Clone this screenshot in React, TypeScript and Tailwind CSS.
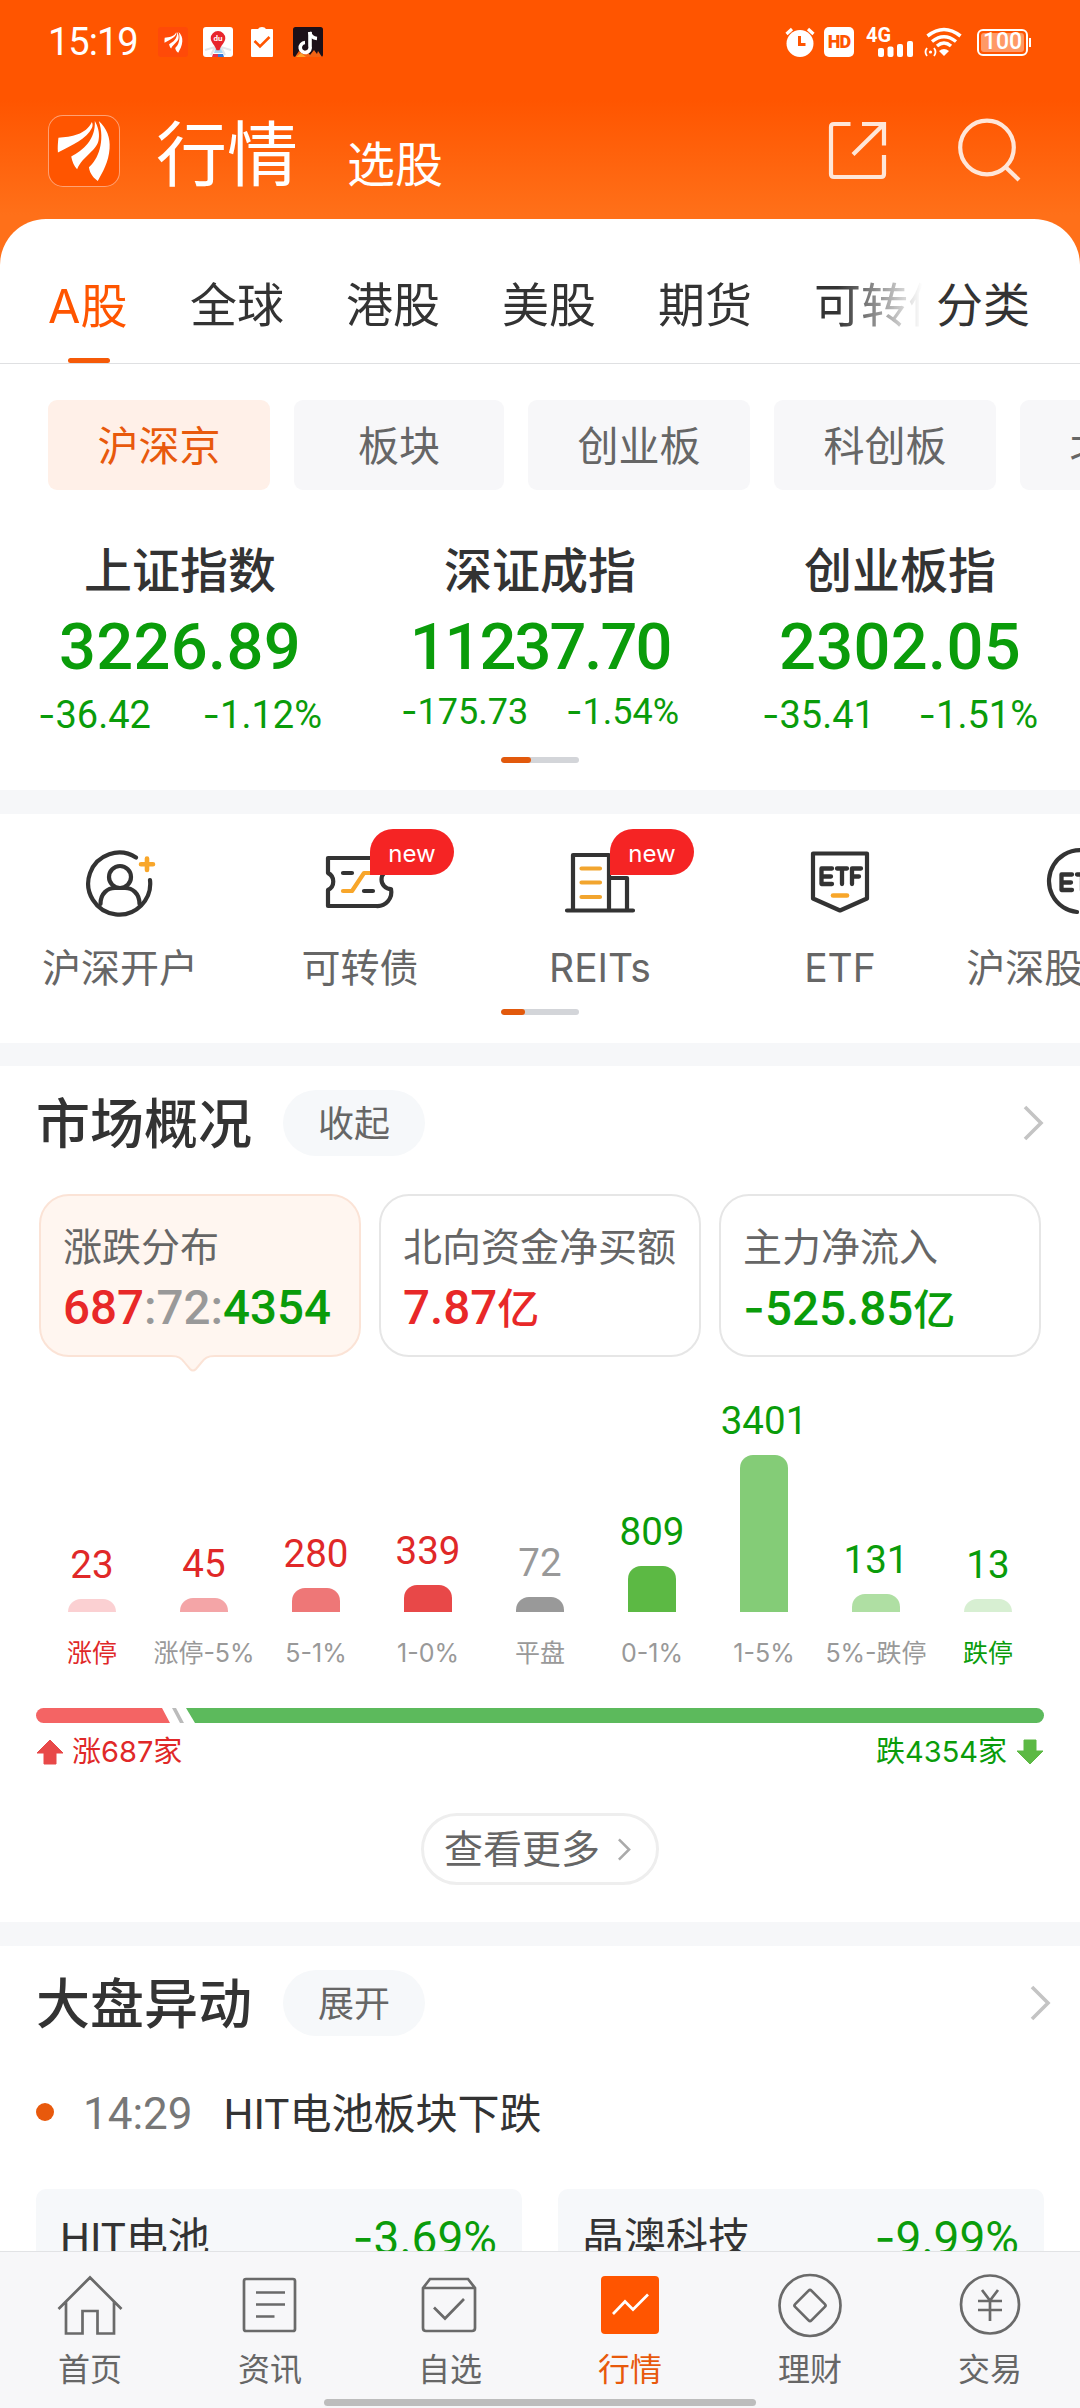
import React from "react";

const tabs = ["全球", "港股", "美股", "期货"];

const indices = [
  { name: "上证指数", value: "3226.89", diff: "-36.42", pct: "-1.12%", box: "w-[284px]", size: "text-[38px]", track: "tracking-[0.300px]" },
  { name: "深证成指", value: "11237.70", diff: "-175.73", pct: "-1.54%", box: "w-[278px]", size: "text-[36px] relative -top-[3px]", track: "tracking-[-2px]" },
  { name: "创业板指", value: "2302.05", diff: "-35.41", pct: "-1.51%", box: "w-[276px]", size: "text-[38px]", track: "tracking-[0.300px]" },
];

const bars = [
  { n: "23", label: "涨停", h: 13, bar: "bg-[#fbd0d2]", num: "text-[#e02828]", lab: "text-[#e02828]" },
  { n: "45", label: "涨停-5%", h: 14, bar: "bg-[#f4a5a7]", num: "text-[#e02828]", lab: "text-[#999]" },
  { n: "280", label: "5-1%", h: 24, bar: "bg-[#ee7777]", num: "text-[#e02828]", lab: "text-[#999]" },
  { n: "339", label: "1-0%", h: 27, bar: "bg-[#e84848]", num: "text-[#e02828]", lab: "text-[#999]" },
  { n: "72", label: "平盘", h: 15, bar: "bg-[#999]", num: "text-[#999]", lab: "text-[#999]" },
  { n: "809", label: "0-1%", h: 46, bar: "bg-[#5cb944]", num: "text-[#0a9c0a]", lab: "text-[#999]" },
  { n: "3401", label: "1-5%", h: 157, bar: "bg-[#84cc77]", num: "text-[#0a9c0a]", lab: "text-[#999]" },
  { n: "131", label: "5%-跌停", h: 18, bar: "bg-[#afdfa3]", num: "text-[#0a9c0a]", lab: "text-[#999]" },
  { n: "13", label: "跌停", h: 13, bar: "bg-[#d7efd2]", num: "text-[#0a9c0a]", lab: "text-[#0a9c0a]" },
];

/* Negative amounts carry the wider Inter hyphen in front of Roboto digits. */
function Signed({ text }: { text: string }) {
  return (
    <>
      <span className="font-[Inter]">-</span>
      {text.slice(1)}
    </>
  );
}

function Feathers({ className }: { className: string }) {
  return (
    <svg className={className} viewBox="0 0 54 62" fill="#fff">
      <path d="M35 1C36 3 36 5 35 7C30 18 15 24 0.500 32C0 27 0.500 22 1 17C14 16 29 14 35 1Z" />
      <path d="M38 0C41 5 43 12 42 18C41 30 26 35 20 49C17 46 15 41 14 36C26 30 39 19 38 0Z" />
      <path d="M42 0C50 7 54 17 53 28C52 42 46 52 41 61C37 58 33 54 32 47C41 40 49 20 42 0Z" />
    </svg>
  );
}

function StatusBar() {
  return (
    <div className="flex h-[84px] items-center pl-[48px] pr-[49px] text-white">
      <span className="w-[110px] text-[38px] leading-[30px] tracking-[-1px]">15:19</span>
      <span className="flex size-[30px] items-center justify-center rounded-[3px] bg-[#ff4a08]">
        <Feathers className="h-[21px] w-[19px]" />
      </span>
      <svg className="ml-[15px] size-[30px]" viewBox="0 0 30 30">
        <rect width="30" height="30" rx="3" fill="#fff" />
        <path d="M2 23L12 20L8 28M28 23L18 20L22 28" stroke="#e3e6ea" strokeWidth="2" fill="none" />
        <path d="M11 26L13 20H17L20 26Z" fill="#a5d8f5" />
        <path d="M10 27H15V30H9Z" fill="#e83545" />
        <path d="M15 27H20L21 30H15Z" fill="#3478d8" />
        <path d="M15 4a7.300 7.300 0 0 1 7.300 7.300c0 4-4.500 7-5.800 12h-3c-1.300-5-5.800-8-5.800-12A7.300 7.300 0 0 1 15 4Z" fill="#e8252d" />
        <text x="15" y="14" textAnchor="middle" fontSize="8" fontWeight="700" fill="#fff">du</text>
      </svg>
      <svg className="ml-[18px] h-[30px] w-[22px]" viewBox="0 0 22 30">
        <path d="M1 2H7Q8 0 11 0Q14 0 15 2H21Q22 2 22 3V29Q22 30 21 30H1Q0 30 0 29V3Q0 2 1 2Z" fill="#fff" />
        <path d="M3.500 14L9 19.500L18.500 10" stroke="#ff5500" strokeWidth="2.600" fill="none" />
      </svg>
      <svg className="ml-[20px] size-[30px]" viewBox="0 0 30 30">
        <rect width="30" height="30" rx="2.500" fill="#1c1018" />
        <path d="M2 30L6 24L10 27L13 23L17 28L21 23L24 27L25 24L29 30Z" fill="#f36414" />
        <path d="M3 30L8 26L13 30Z" fill="#ffa028" />
        <path d="M17 5V19A5 5 0 1 1 12 15.500" stroke="#fff" strokeWidth="3.600" fill="none" />
        <path d="M16.500 5Q18 11 24 11.500" stroke="#fff" strokeWidth="3.400" fill="none" />
      </svg>
      <div className="ml-auto flex items-center">
        <svg className="h-[30px] w-[30px]" viewBox="0 0 30 30">
          <circle cx="15" cy="16.500" r="13.500" fill="#fff" />
          <path d="M1.500 7L7 2M28.500 7L23 2" stroke="#fff" strokeWidth="3.200" />
          <path d="M14.500 9V17.500H20.500" stroke="#ff5500" strokeWidth="3" fill="none" />
        </svg>
        <span className="ml-[9px] flex size-[30px] items-center justify-center rounded-[5px] bg-white text-[18px] leading-[30px] font-black tracking-[-1px] text-[#ff5500]">HD</span>
        <svg className="ml-[12px] h-[30px] w-[48px]" viewBox="0 0 48 30">
          <text x="0" y="15" fontSize="20" fontWeight="700" fill="#fff" textLength="25" lengthAdjust="spacingAndGlyphs">4G</text>
          <g fill="#fff">
            <rect x="12" y="21" width="6" height="9" rx="2" />
            <rect x="21.500" y="19.500" width="6" height="10.500" rx="2" />
            <rect x="31" y="17" width="6" height="13" rx="2" />
            <rect x="41" y="14" width="6" height="16" rx="2" />
          </g>
        </svg>
        <svg className="ml-[10px] h-[30px] w-[38px]" viewBox="0 0 38 30" fill="none" stroke="#fff">
          <path d="M3.500 9Q20 -4 36.500 9" strokeWidth="3.600" />
          <path d="M8 14.500Q20 5 32 14.500" strokeWidth="3.400" />
          <path d="M13 19Q20 13 27 19" strokeWidth="3.400" />
          <path d="M15 24Q20 20 25 24L20 29Z" fill="#fff" stroke="none" />
          <circle cx="6.500" cy="25" r="1.600" fill="#fff" stroke="none" />
          <path d="M3 21Q0 25 3 29M10 21Q13 25 10 29" strokeWidth="1.800" />
        </svg>
        <div className="ml-[15px] flex h-[27px] w-[51px] items-center justify-center rounded-[6px] border-[2px] border-white p-[2px]">
          <span className="flex h-full w-full items-center justify-center rounded-[3px] bg-white/40 text-[23px] leading-[20px] font-medium">100</span>
        </div>
        <span className="ml-[1px] h-[9px] w-[2px] bg-white" />
      </div>
    </div>
  );
}

function Chevron({ className, color, w }: { className: string; color: string; w: number }) {
  return (
    <svg className={className} viewBox="0 0 22 36" fill="none">
      <path d="M3 2L19 18L3 34" stroke={color} strokeWidth={w} />
    </svg>
  );
}

function Indicator({ short }: { short?: boolean }) {
  return (
    <div className="mx-auto h-[6px] w-[78px] overflow-hidden rounded-full bg-[#d3d5d9]">
      <div className={short ? "h-full w-[24px] rounded-full bg-[#e2590c]" : "h-full w-[30px] rounded-full bg-[#e2590c]"} />
    </div>
  );
}

function NewBadge() {
  return (
    <span className="absolute top-[15px] left-[130px] flex h-[46px] w-[84px] items-center justify-center rounded-[23px] rounded-bl-none bg-[#f52424] pt-[4px] font-[Inter] text-[24px] leading-[30px] text-white">
      new
    </span>
  );
}

function Shortcut({ label, badge, children }: { label: string; badge?: boolean; children: React.ReactNode }) {
  return (
    <div className="relative flex w-[240px] shrink-0 flex-col items-center pt-[32px]">
      <svg className="h-[72px] w-[72px]" viewBox="0 0 72 72" fill="none" stroke="#333" strokeWidth="4.200" strokeLinecap="round" strokeLinejoin="round">
        {children}
      </svg>
      {badge && <NewBadge />}
      <span className="mt-[25px] font-[Inter,'Noto_Sans_CJK_SC',sans-serif] text-[39px] leading-[50px] whitespace-nowrap text-[#666]">{label}</span>
    </div>
  );
}

function SectionHead({ title, action, right }: { title: string; action: string; right: string }) {
  return (
    <div className={"flex h-[66px] items-center pl-[36px] " + right}>
      <h2 className="pt-[6px] text-[54px] leading-[60px] font-medium text-[#333]">{title}</h2>
      <span className="ml-[31px] flex h-[66px] w-[142px] items-center justify-center rounded-full bg-[#f6f8fa] pt-[3px] text-[36px] text-[#666]">{action}</span>
      <Chevron className="ml-auto h-[36px] w-[22px]" color="#c4c4c4" w={3.6} />
    </div>
  );
}

function Distribution() {
  return (
    <>
      <div className="flex h-[255px] items-end justify-center">
        {bars.map((b) => (
          <div key={b.label} className="flex w-[112px] flex-col items-center">
            <span className={"text-[38.500px] leading-[36px] " + b.num}>{b.n}</span>
            <div className={"mt-[16px] w-[48px] rounded-t-[13px] " + b.bar} style={{ height: b.h }} />
          </div>
        ))}
      </div>
      <div className="mt-[25px] flex justify-center font-[Inter,'Noto_Sans_CJK_SC',sans-serif]">
        {bars.map((b) => (
          <span key={b.label} className={"w-[112px] text-center text-[25px] leading-[32px] whitespace-nowrap " + b.lab}>{b.label}</span>
        ))}
      </div>
    </>
  );
}

function RatioBar() {
  return (
    <div className="mx-[36px] mt-[39px]">
      <div className="flex h-[15px]">
        <div className="w-[134px] rounded-l-full bg-[#f46464] [clip-path:polygon(0_0,126px_0,134px_100%,0_100%)]" />
        <div className="ml-[2px] w-[12px] bg-[#bbb] [clip-path:polygon(0_0,4px_0,12px_100%,8px_100%)]" />
        <div className="ml-[2px] flex-1 rounded-r-full bg-[#5cba5c] [clip-path:polygon(0_0,100%_0,100%_100%,9px_100%)]" />
      </div>
      <div className="mt-[13px] flex h-[32px] items-center justify-between font-[Inter,'Noto_Sans_CJK_SC',sans-serif] text-[29px] leading-[32px]">
        <span className="flex items-center text-[#e02828]">
          <svg className="mr-[8px] h-[26px] w-[28px]" viewBox="0 0 28 26">
            <path d="M14 1L27 14H20V25H8V14H1Z" fill="#e84848" stroke="#e84848" strokeLinejoin="round" />
          </svg>
          涨687家
        </span>
        <span className="flex items-center text-[#0a9c0a]">
          跌4354家
          <svg className="ml-[9px] h-[26px] w-[28px]" viewBox="0 0 28 26">
            <path d="M14 25L27 12H20V1H8V12H1Z" fill="#5cb944" stroke="#5cb944" strokeLinejoin="round" />
          </svg>
        </span>
      </div>
    </div>
  );
}

function NavItem({ label, active, children }: { label: string; active?: boolean; children: React.ReactNode }) {
  return (
    <div className="flex w-[180px] flex-col items-center pt-[19px]">
      <svg className="size-[68px]" viewBox="0 0 68 68" fill="none" stroke="#6a6a6a" strokeWidth="2.700">
        {children}
      </svg>
      <span className={"mt-[11px] text-[32px] leading-[40px] " + (active ? "text-[#e8590c]" : "text-[#666]")}>{label}</span>
    </div>
  );
}

function Mover({ name, pct }: { name: string; pct: string }) {
  return (
    <div className="flex h-[98px] w-[486px] items-center justify-between rounded-[10px] bg-[#f6f8fa] pr-[25px] pl-[24px] text-[42px]">
      <span className="text-[#333]">{name}</span>
      <span className="text-[46px] text-[#0a9c0a]"><Signed text={pct} /></span>
    </div>
  );
}

export default function App() {
  return (
    <div className="flex h-[2408px] w-[1080px] flex-col overflow-hidden bg-[#ff7019] font-[Roboto,'Noto_Sans_CJK_SC',sans-serif] text-[#333]">
      <header className="-mb-[46px] h-[265px] shrink-0 bg-[linear-gradient(180deg,#ff5500_0px,#ff5500_100px,#ff7019_215px)]">
        <StatusBar />
        <div className="flex h-[135px] pl-[48px] text-white">
          <div className="mt-[31px] flex h-[72px] w-[72px] items-center justify-center rounded-[15px] border-[1.5px] border-white/45 bg-[#ff5500]">
            <Feathers className="h-[61px] w-[54px]" />
          </div>
          <h1 className="ml-[36px] mt-[32px] text-[71px] leading-[80px]">行情</h1>
          <span className="ml-[49px] mt-[52px] text-[48px] leading-[60px]">选股</span>
          <svg className="ml-auto mt-[37px] h-[60px] w-[60px]" viewBox="0 0 60 60" fill="none" stroke="#ffe6d8" strokeWidth="4.200">
            <path d="M22.500 3H6Q3 3 3 6V53Q3 56 6 56H53Q56 56 56 53V34" />
            <path d="M34 3H56V24.500M56 3L25 33.500" />
          </svg>
          <svg className="ml-[68px] mr-[58px] mt-[34px] h-[66px] w-[66px]" viewBox="0 0 66 66" fill="none" stroke="#ffe6d8" strokeWidth="4.200">
            <circle cx="31" cy="29.500" r="26.800" />
            <path d="M49.500 49L63 62" />
          </svg>
        </div>
      </header>

      <main className="h-[2032px] shrink-0 overflow-hidden rounded-t-[46px] bg-white">
        <nav className="flex h-[145px] border-b-[1px] border-[#dfe0e2] pl-[48px]">
          <div className="flex w-[874px] overflow-hidden text-[47px] leading-[60px] [mask-image:linear-gradient(90deg,#000_790px,transparent_874px)]">
            <div className="flex w-[142px] shrink-0 flex-col text-[#ff5500]">
              <span className="mt-[57px]"><span className="font-[Inter]">A</span>股</span>
              <span className="mt-[21px] ml-[20px] h-[6px] w-[42px] rounded-full bg-[#f55a08]" />
            </div>
            {tabs.map((t) => (
              <span key={t} className="mt-[57px] w-[156px] shrink-0">{t}</span>
            ))}
            <span className="mt-[57px] shrink-0">可转债</span>
          </div>
          <span className="mt-[57px] ml-[14px] text-[47px] leading-[60px] whitespace-nowrap">分类</span>
        </nav>

        <div className="mt-[36px] flex gap-[24px] overflow-hidden pl-[48px] text-[41px] leading-[86px] text-[#666] [&>span]:h-[90px] [&>span]:shrink-0 [&>span]:rounded-[9px] [&>span]:pt-[4px] [&>span]:text-center">
          <span className="w-[222px] bg-[#fff0e8] text-[#e8590c]">沪深京</span>
          <span className="w-[210px] bg-[#f7f7f9]">板块</span>
          <span className="w-[222px] bg-[#f7f7f9]">创业板</span>
          <span className="w-[222px] bg-[#f7f7f9]">科创板</span>
          <span className="w-[222px] bg-[#f7f7f9]">北交所</span>
        </div>

        <div className="mt-[51px] flex h-[216px]">
          {indices.map((x) => (
            <div key={x.name} className="flex w-[360px] flex-col items-center">
              <span className="text-[48px] leading-[62px] font-medium">{x.name}</span>
              <span className={"mt-[9px] text-[65px] leading-[70px] font-medium text-[#0a9c0a] " + x.track}>{x.value}</span>
              <div className={"mt-[12px] flex justify-between leading-[40px] text-[#0a9c0a] " + x.box}>
                <span className={x.size}><Signed text={x.diff} /></span>
                <span className={x.size}><Signed text={x.pct} /></span>
              </div>
            </div>
          ))}
        </div>
        <Indicator />

        <div className="mt-[27px] h-[24px] bg-[#f6f7f9]" />

        <div className="flex h-[195px] overflow-hidden">
          <Shortcut label="沪深开户">
            <path d="M52 11.500A31 31 0 1 0 66 34" />
            <circle cx="36" cy="31" r="11" />
            <path d="M16.500 58C16.500 47 24 42 31 42H41C48 42 55.500 47 55.500 58" />
            <path d="M63 12.500V24M57 18.300H69" stroke="#f8a62a" strokeWidth="4.600" />
          </Shortcut>
          <Shortcut label="可转债" badge>
            <path d="M4 12H67V24A9.500 9.500 0 0 0 67 43A14 14 0 0 1 52 60H4V44A9.500 9.500 0 0 0 4 27Z" />
            <path d="M19 27H28M40 45H49" />
            <path d="M19 45H28L40 27H49" stroke="#f8a62a" />
          </Shortcut>
          <Shortcut label="REITs" badge>
            <path d="M3 64.500H69M9 64V9H45V64M45 32H63V64" />
            <path d="M17.500 22.500H36M17.500 36.500H36M17.500 51H36" stroke="#f2a52e" />
          </Shortcut>
          <Shortcut label="ETF">
            <path d="M9 7.500H63V52.500L36 64.500L9 52.500Z" />
            <path d="M29 49.500H43" stroke="#f8a62a" strokeWidth="4.600" />
            <path d="M28 22.500H17.500V38H28M17.500 30.500H27M33 22.500H43M38 22.500V38M57 22.500H48V38M48 30.500H55" strokeWidth="4.300" />
          </Shortcut>
          <Shortcut label="沪深股通ETF">
            <path d="M33 66A31 31 0 1 1 39 66" />
            <path d="M28 28.500H17.500V44H28M17.500 36.500H27M33 28.500H43M38 28.500V44M57 28.500H48V44M48 36.500H55" strokeWidth="4.300" />
          </Shortcut>
        </div>
        <Indicator short />

        <div className="mt-[28px] h-[23px] bg-[#f6f7f9]" />

        <div className="pt-[24px]">
          <SectionHead title="市场概况" action="收起" right="pr-[36px]" />
          <div className="mt-[38px] flex gap-[18px] pl-[39px] text-[39px] leading-[48px] [&>div]:h-[163px] [&>div]:w-[322px] [&>div]:rounded-[30px] [&>div]:border-[2px] [&>div]:pt-[28px] [&>div]:pl-[22px] [&_p]:text-[#666] [&_strong]:mt-[12px] [&_strong]:block [&_strong]:text-[47.500px] [&_strong]:font-medium [&_strong]:whitespace-nowrap [&_small]:text-[42px]">
            <div className="relative border-[#fbe3d6] bg-[#fff6f0]">
              <p>涨跌分布</p>
              <strong className="text-[#e82828]">
                687<span className="text-[#999]">:72:</span><span className="text-[#0a9c0a]">4354</span>
              </strong>
              <svg className="absolute top-[157px] left-[130px] h-[20px] w-[44px]" viewBox="0 0 44 20">
                <path d="M0 0H44V3C36 3 34 5 30 10L25 16Q22 19 19 16L14 10C10 5 8 3 0 3Z" fill="#fff6f0" />
                <path d="M0 3C8 3 10 5 14 10L19 16Q22 19 25 16L30 10C34 5 36 3 44 3" fill="none" stroke="#fbe3d6" strokeWidth="2" />
              </svg>
            </div>
            <div className="border-[#e6e6e6]">
              <p>北向资金净买额</p>
              <strong className="text-[#e82828]">7.87<small>亿</small></strong>
            </div>
            <div className="border-[#e6e6e6]">
              <p>主力净流入</p>
              <strong className="text-[#0a9c0a]"><Signed text="-525.85" /><small>亿</small></strong>
            </div>
          </div>

          <Distribution />
          <RatioBar />

          <div className="mx-auto mt-[45px] flex h-[72px] w-[238px] items-center rounded-full border-[3px] border-[#eee] pl-[20px] text-[39px] text-[#666]">
            <span className="pt-[2px] whitespace-nowrap">查看更多</span>
            <Chevron className="ml-[17px] h-[23px] w-[14px] shrink-0" color="#aaa" w={4} />
          </div>
        </div>

        <div className="mt-[37px] h-[24px] bg-[#f6f7f9]" />

        <div className="pt-[24px]">
          <SectionHead title="大盘异动" action="展开" right="pr-[29px]" />
          <div className="mt-[48px] flex h-[60px] items-center pl-[36px] text-[42px]">
            <span className="-mt-[4px] size-[18px] rounded-full bg-[#e8590c]" />
            <span className="ml-[29px] text-[44px] text-[#777]">14:29</span>
            <span className="ml-[31px]">HIT电池板块下跌</span>
          </div>
          <div className="mt-[45px] flex justify-between px-[36px]">
            <Mover name="HIT电池" pct="-3.69%" />
            <Mover name="晶澳科技" pct="-9.99%" />
          </div>
        </div>
      </main>

      <footer className="h-[157px] shrink-0 border-t border-[#e2e3e5] bg-[#f7f7f9]">
        <div className="flex h-[147px]">
          <NavItem label="首页">
            <path d="M2.500 38L34 6.500L65.500 38M10 31V62.500H26.500V40H41.500V62.500H58V31" />
          </NavItem>
          <NavItem label="资讯">
            <rect x="8" y="8" width="51" height="52" rx="2" />
            <path d="M20 21.500H49M20 33.500H49M20 45.500H38.500" />
          </NavItem>
          <NavItem label="自选">
            <path d="M7 17L14 8H52L59 17V57Q59 60 56 60H10Q7 60 7 57ZM7 17H59M18 36.500L29 47.500L48 28" />
          </NavItem>
          <NavItem label="行情" active>
            <rect x="5" y="5" width="58" height="58" rx="4" fill="#ff5500" stroke="none" />
            <path d="M17 43L29 30.500L37 38.500L52 23.500" stroke="#fff" />
          </NavItem>
          <NavItem label="理财">
            <circle cx="34" cy="34.500" r="30.500" />
            <rect x="22.500" y="23" width="23" height="23" rx="2" transform="rotate(45 34 34.500)" />
          </NavItem>
          <NavItem label="交易">
            <circle cx="34" cy="33.500" r="29" />
            <path d="M26 19L34 29.500L42 19M22 30H46M22 39H46M34 29.500V50" />
          </NavItem>
        </div>
        <div className="mx-auto h-[7px] w-[432px] rounded-full bg-[#bdbdbd]" />
      </footer>
    </div>
  );
}
